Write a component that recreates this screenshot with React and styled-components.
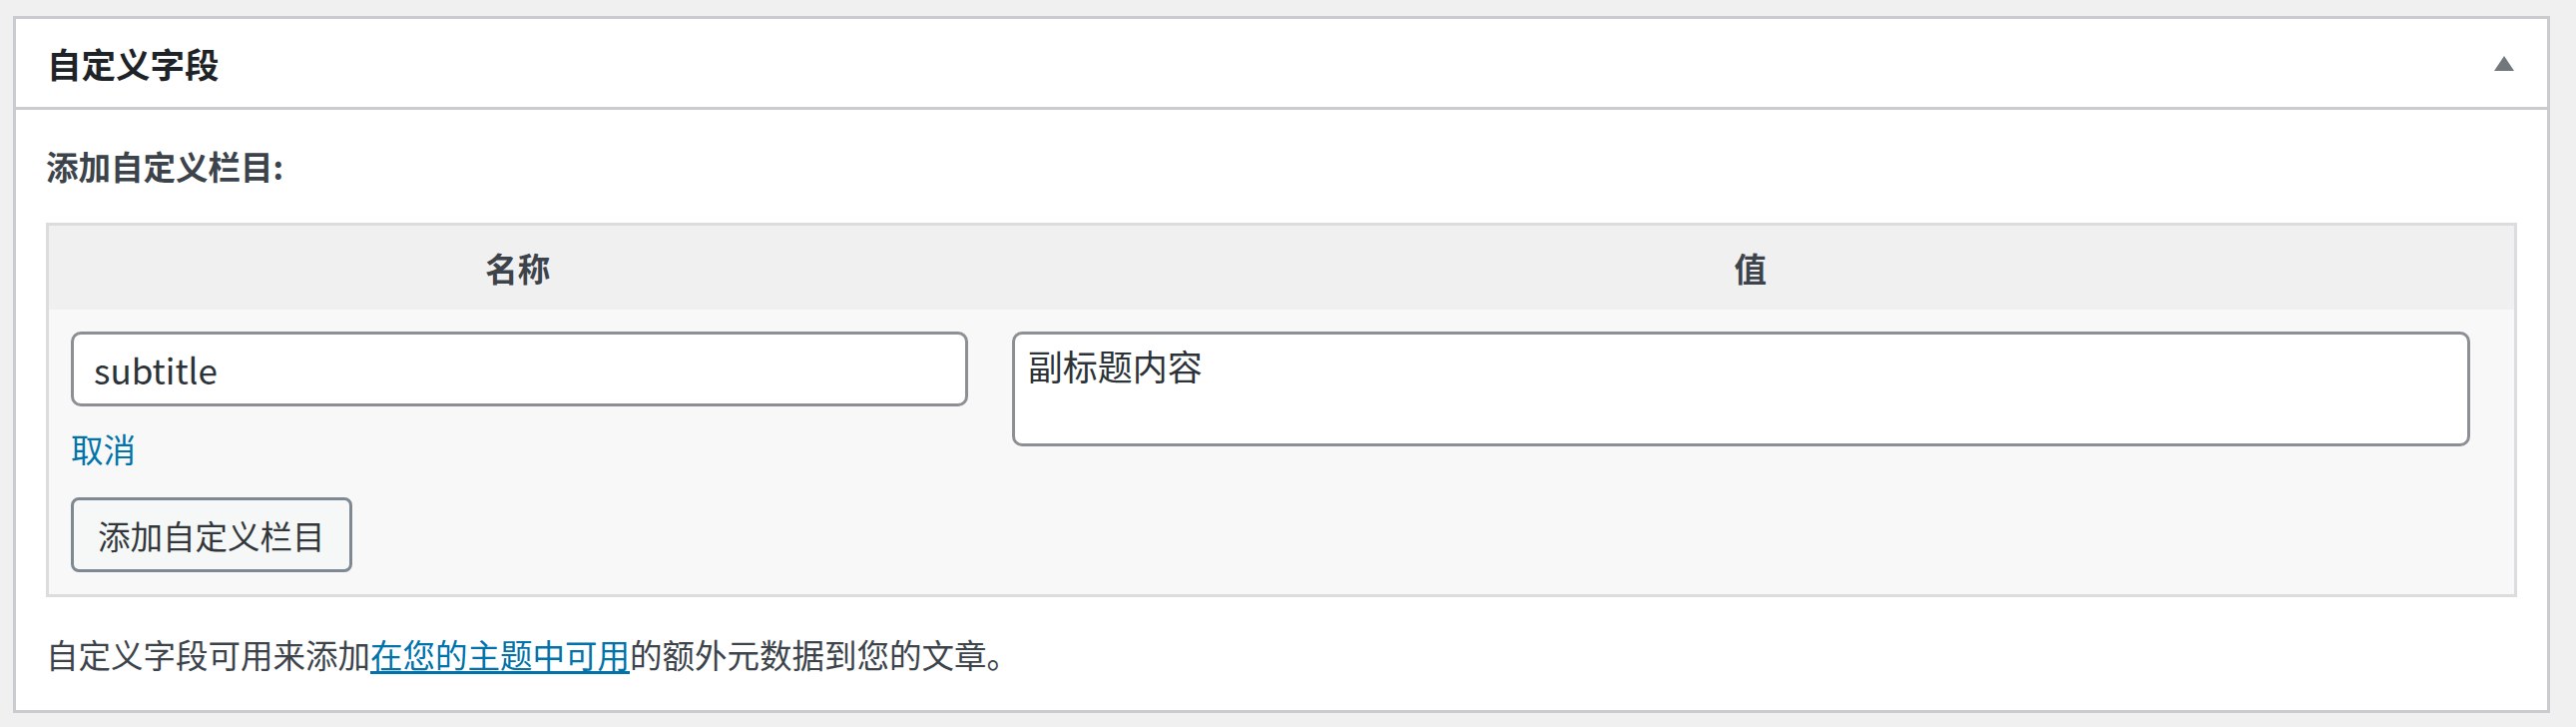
import React from 'react'
import styled, { createGlobalStyle } from 'styled-components'

const GlobalStyle = createGlobalStyle`
body{
    margin:0;
    background:#f0f0f1;
    font-family:"Noto Sans CJK SC","Noto Sans",sans-serif;
    color:#3c434a;
}
`

const Page = styled.div`
padding:16px 26px 14px 13px;
`

const Postbox = styled.div`
border:3px solid #c9cbcf;
background:#fff;
`

const Header = styled.div`
height:88px;
display:flex;
align-items:center;
justify-content:space-between;
padding:0 33px 0 31px;
border-bottom:3px solid #c9cbcf;
`

const Title = styled.h2`
margin:0;
font-size:34.5px;
font-weight:700;
color:#1d2327;
line-height:1.4;
`

const Toggle = styled.svg`
width:20px;
height:15px;
display:block;
`

const Inside = styled.div`
padding:33px 30px 33px 30px;
font-size:32.5px;
line-height:46px;
`

const Label = styled.strong`
display:block;
font-weight:700;
color:#3c434a;
`

const Table = styled.table`
width:100%;
margin-top:34px;
border:3px solid #dcdcde;
border-collapse:collapse;
table-layout:fixed;
background:#f8f8f8;
`

const Th = styled.th`
height:84px;
padding:0;
background:#f0f0f1;
font-weight:700;
font-size:32.5px;
color:#3c434a;
text-align:center;
width:${p => p.$width};
`

const Td = styled.td`
vertical-align:top;
padding:${p => p.$pad};
`

const TextInput = styled.input`
display:block;
box-sizing:border-box;
width:100%;
height:75px;
margin:0;
padding:0 20px;
border:3px solid #8c8f94;
border-radius:10px;
background:#fff;
font-family:inherit;
font-size:35px;
color:#2c3338;
outline:none;
`

const TextArea = styled.textarea`
display:block;
box-sizing:border-box;
width:100%;
height:115px;
margin:0;
padding:6px 13px;
border:3px solid #8c8f94;
border-radius:10px;
background:#fff;
font-family:inherit;
font-size:35px;
line-height:1.4;
color:#2c3338;
resize:none;
outline:none;
`

const CancelLink = styled.a`
display:block;
margin-top:19px;
width:fit-content;
color:#0073aa;
text-decoration:none;
line-height:46px;
`

const Button = styled.button`
display:block;
margin-top:26px;
height:75px;
padding:0 24px;
border:3px solid #7e8993;
border-radius:8px;
background:#f6f7f7;
color:#32373c;
font-family:inherit;
font-size:32.5px;
cursor:pointer;
`

const Note = styled.p`
margin:34px 0 0;
color:#3c434a;
`

const NoteLink = styled.a`
color:#0073aa;
text-decoration:underline;
text-decoration-thickness:3px;
text-underline-offset:3px;
`

export default function App() {
    return (
        <Page>
            <GlobalStyle />
            <Postbox>
                <Header>
                    <Title>自定义字段</Title>
                    <Toggle viewBox="0 0 20 15">
                        <polygon points="10,0 20,15 0,15" fill="#72777c" />
                    </Toggle>
                </Header>
                <Inside>
                    <Label>添加自定义栏目:</Label>
                    <Table>
                        <thead>
                            <tr>
                                <Th $width="38%">名称</Th>
                                <Th>值</Th>
                            </tr>
                        </thead>
                        <tbody>
                            <tr>
                                <Td $pad="22px 19px 22px 22px">
                                    <TextInput defaultValue="subtitle" />
                                    <CancelLink href="#">取消</CancelLink>
                                    <Button>添加自定义栏目</Button>
                                </Td>
                                <Td $pad="22px 44px 22px 25px">
                                    <TextArea defaultValue="副标题内容" />
                                </Td>
                            </tr>
                        </tbody>
                    </Table>
                    <Note>
                        自定义字段可用来添加<NoteLink href="#">在您的主题中可用</NoteLink>的额外元数据到您的文章。
                    </Note>
                </Inside>
            </Postbox>
        </Page>
    )
}
